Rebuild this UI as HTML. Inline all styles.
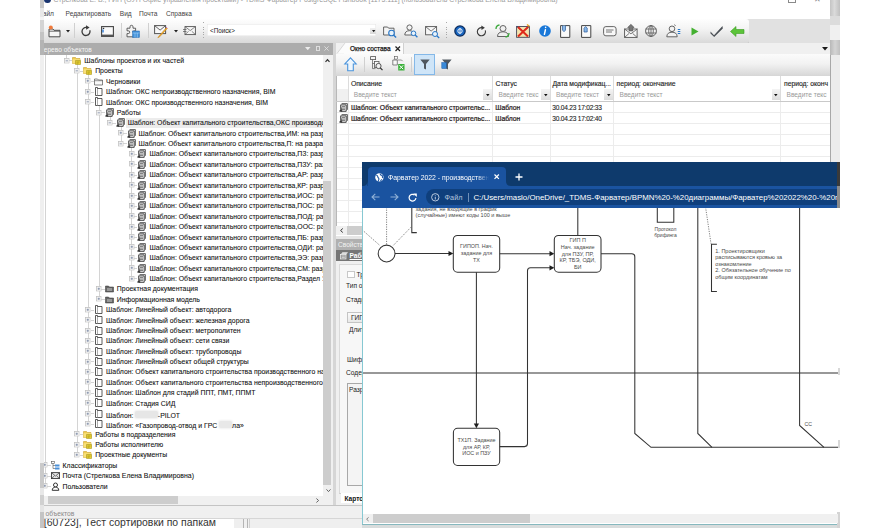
<!DOCTYPE html><html><head><meta charset="utf-8"><style>
html,body{margin:0;padding:0}
body{width:880px;height:528px;overflow:hidden;background:#fff;position:relative;font-family:"Liberation Sans",sans-serif}
.a{position:absolute}
.t{position:absolute;white-space:nowrap;line-height:1}
.clip{position:absolute;overflow:hidden}
svg.i{position:absolute;overflow:visible}
</style></head><body>

<svg width="0" height="0" style="position:absolute">
<defs>
<symbol id="xp" viewBox="0 0 6 6"><rect x="0.4" y="0.4" width="5.2" height="5.2" fill="#f0f0f0" stroke="#c0c0c0" stroke-width="0.8"/><path d="M1.8 3H4.2M3 1.8V4.2" stroke="#6a7a9a" stroke-width="0.7"/></symbol>
<symbol id="xm" viewBox="0 0 6 6"><rect x="0.4" y="0.4" width="5.2" height="5.2" fill="#f0f0f0" stroke="#c0c0c0" stroke-width="0.8"/><path d="M1.8 3H4.2" stroke="#6a7a9a" stroke-width="0.7"/></symbol>
<symbol id="yf" viewBox="0 0 9 9"><path d="M0.5 1.5h3l1 1h3.5v5h-7.5z" fill="#f0cc50" stroke="#c8a030" stroke-width="0.6"/><path d="M0.5 3.2h7.5v4.3h-7.5z" fill="#f8e07a"/><path d="M3.5 4.5h5v4h-5z" fill="#e8d030" stroke="#9a8a10" stroke-width="0.5"/><path d="M4.5 6h3M4.5 7.2h2" stroke="#8a7a10" stroke-width="0.5"/></symbol>
<symbol id="of" viewBox="0 0 9 8"><path d="M0.5 1.5h3l1 1h4v5h-8z" fill="#fafafa" stroke="#555" stroke-width="0.7"/><path d="M0.5 3.2h8" stroke="#555" stroke-width="0.6"/></symbol>
<symbol id="bk" viewBox="0 0 8 9"><path d="M1 0.5h2v8h-2z" fill="#fff" stroke="#333" stroke-width="0.8"/><path d="M3 1.5h4.5v7h-4.5" fill="#fff" stroke="#333" stroke-width="0.8"/></symbol>
<symbol id="dc" viewBox="0 0 9 9"><path d="M2.6 0.6h5.8v6.2" fill="none" stroke="#3a3a3a" stroke-width="0.8"/><path d="M1.6 1.9h5.6v6.4H1.4" fill="#fafafa" stroke="#2e2e2e" stroke-width="0.9"/><path d="M1.6 1.9V6.6L0.4 8.3h2.6z" fill="#333" stroke="#333" stroke-width="0.5"/><path d="M2.9 3.6h3.1M2.9 5.1h3.1M2.9 6.6h3.1" stroke="#4a4a4a" stroke-width="0.75"/></symbol>
<symbol id="df" viewBox="0 0 9 8"><path d="M0.5 1.5h3l1 1h4v5h-8z" fill="#666" stroke="#333" stroke-width="0.5"/><rect x="2" y="3.5" width="5" height="3" fill="#999"/></symbol>
<symbol id="cl" viewBox="0 0 9 9"><rect x="0.5" y="0.5" width="3" height="2" fill="#fff" stroke="#555" stroke-width="0.6"/><path d="M2 2.5v5h2M2 4.5h2" stroke="#555" stroke-width="0.6" fill="none"/><rect x="4" y="3.5" width="4.5" height="2" fill="#4a90d8"/><rect x="4" y="6.5" width="4.5" height="2" fill="#4a90d8"/></symbol>
<symbol id="ml" viewBox="0 0 10 8"><rect x="0.6" y="0.8" width="8.8" height="6.6" fill="#e8e8e8" stroke="#3a3a3a" stroke-width="1"/><path d="M0.6 0.8l4.4 3.8 4.4-3.8M0.6 7.4l3.2-3M9.4 7.4l-3.2-3" fill="none" stroke="#3a3a3a" stroke-width="0.8"/></symbol>
<symbol id="us" viewBox="0 0 9 9"><circle cx="4.5" cy="3" r="2" fill="#fff" stroke="#333" stroke-width="1"/><path d="M1.2 8.3c0-2.2 1.5-3.1 3.3-3.1s3.3 0.9 3.3 3.1z" fill="#fff" stroke="#333" stroke-width="1"/></symbol>
</defs></svg>

<div class="a" style="left:40px;top:0px;width:4px;height:8px;background:#c8c8c8;"></div>
<div class="a" style="left:40px;top:8px;width:4px;height:9px;background:#e8e8e8;"></div>
<div class="a" style="left:40px;top:17px;width:4px;height:3px;background:#f4f4f4;"></div>
<div class="a" style="left:40px;top:20px;width:4px;height:12px;background:#d4d4d4;"></div>
<div class="a" style="left:40px;top:32px;width:4px;height:8px;background:#c4c4c4;"></div>
<div class="a" style="left:40px;top:40px;width:4px;height:15px;background:#b4b4b4;"></div>
<div class="a" style="left:40px;top:55px;width:4px;height:408px;background:#efefef;"></div>
<div class="a" style="left:40px;top:463px;width:4px;height:25px;background:#cacaca;"></div>
<div class="a" style="left:40px;top:488px;width:4px;height:7px;background:#e8e8e8;"></div>
<div class="a" style="left:40px;top:495px;width:4px;height:10px;background:#d0d0d0;"></div>
<div class="a" style="left:40px;top:505px;width:4px;height:7px;background:#e4e4e4;"></div>
<div class="a" style="left:40px;top:512px;width:4px;height:16px;background:#c4c4c4;"></div>
<div class="a" style="left:830px;top:0px;width:10px;height:16px;background:linear-gradient(90deg,#c4c4c4,#dadada 45%,#c0c0c0);"></div>
<div class="a" style="left:830px;top:16px;width:10px;height:9px;background:#dcdcdc;"></div>
<div class="a" style="left:830px;top:25px;width:10px;height:15px;background:#f0f0f0;"></div>
<div class="a" style="left:830px;top:40px;width:10px;height:15px;background:linear-gradient(90deg,#b8b8b8,#d4d4d4 50%,#c0c0c0);"></div>
<div class="a" style="left:830px;top:55px;width:10px;height:107px;background:#ececec;"></div>
<div class="a" style="left:829.8px;top:55px;width:1px;height:107px;background:#a8a8a8;"></div>
<div class="clip" style="left:44px;top:0;width:786px;height:8px;background:#fff">
<div class="a" style="left:0px;top:-4px;width:6.5px;height:7px;border-radius:50%;background:#1a3570"></div>
<div class="t" style="left:9.60px;top:-2.62px;font-size:6.92px;color:#9a9a9a;font-weight:400;">Стрелкова Е. В., ГИП (ОУП Офис управления проектами) - TDMS Фарватер PostgreSQL Fishbook [1175.111] (пользователь Стрелкова Елена Владимировна)</div>
<div class="a" style="left:744px;top:-6px;width:6px;height:7px;border:1px solid #8a8a8a"></div>
<div class="t" style="left:769.50px;top:-4.40px;font-size:8px;color:#8a8a8a;font-weight:400;">✕</div>
</div>
<div class="clip" style="left:44px;top:8px;width:786px;height:11px;background:#fff">
<div class="t" style="left:-6.30px;top:2.99px;font-size:6.6px;color:#444;font-weight:400;">Файл</div>
<div class="t" style="left:21.60px;top:2.99px;font-size:6.6px;color:#444;font-weight:400;">Редактировать</div>
<div class="t" style="left:75.75px;top:2.99px;font-size:6.6px;color:#444;font-weight:400;">Вид</div>
<div class="t" style="left:95.00px;top:2.99px;font-size:6.6px;color:#444;font-weight:400;">Почта</div>
<div class="t" style="left:122.00px;top:2.99px;font-size:6.6px;color:#444;font-weight:400;">Справка</div>
</div>
<div class="a" style="left:44px;top:19px;width:786px;height:24px;background:#e1e1e1;"></div>
<div class="a" style="left:44px;top:19px;width:705px;height:23.5px;background:linear-gradient(#fefefe,#f4f4f4 40%,#d9d9d9);border-radius:0 3px 3px 0;box-shadow:0 1px 0 #bdbdbd"></div>
<div class="a" style="left:73.75px;top:23px;width:1px;height:15px;background:#d0d0d0;"></div>
<div class="a" style="left:121px;top:23px;width:1px;height:15px;background:#d0d0d0;"></div>
<div class="a" style="left:147.5px;top:23px;width:1px;height:15px;background:#d0d0d0;"></div>
<div class="a" style="left:203px;top:22px;width:1px;height:17px;background:repeating-linear-gradient(#a8a8a8 0 1px,transparent 1px 2.5px)"></div>
<div class="a" style="left:446px;top:22px;width:1px;height:17px;background:repeating-linear-gradient(#a8a8a8 0 1px,transparent 1px 2.5px)"></div>
<svg class="i" style="left:47.5px;top:24.5px" width="13" height="13" viewBox="0 0 13 13"><path d="M1 4h4l1 1.3h6v6.5H1z" fill="#f6f6f6" stroke="#4a4a4a" stroke-width="1"/><path d="M1 6.2h11" stroke="#4a4a4a" stroke-width="0.8"/><circle cx="2.8" cy="2.6" r="2" fill="#f07a3a"/></svg>
<svg class="i" style="left:66px;top:30px" width="4" height="3" viewBox="0 0 4 3"><path d="M0 0h4L2 2.5z" fill="#222"/></svg>
<svg class="i" style="left:81px;top:25px" width="11" height="12" viewBox="0 0 11 12"><path d="M8.8 5.2A4 4 0 1 1 6 2.6" fill="none" stroke="#3a3a3a" stroke-width="1.3"/><path d="M5 0.3l3.6 2.3-3.4 2.2z" fill="#3a3a3a"/></svg>
<svg class="i" style="left:101px;top:25.5px" width="13" height="11" viewBox="0 0 13 11"><rect x="0.6" y="0.6" width="11.8" height="9.8" fill="#fafafa" stroke="#444" stroke-width="1.1"/><rect x="0.6" y="8.6" width="11.8" height="1.8" fill="#555"/><path d="M2 3.5v3" stroke="#2a7ad8" stroke-width="1.4"/><rect x="1.8" y="1.8" width="1.4" height="1.2" fill="#333"/></svg>
<svg class="i" style="left:126px;top:24px" width="14" height="14" viewBox="0 0 14 14"><path d="M1 4.2h3v-1.4a1.5 1.5 0 0 1 3 0v1.4h2.6v2.6H8.2a1.4 1.4 0 0 0 0 2.8h1.4v3.2H1V9.6h1.3a1.4 1.4 0 0 0 0-2.8H1z" fill="#f3f3f3" stroke="#505050" stroke-width="0.9"/><rect x="6.5" y="7" width="7" height="6.5" fill="#3f8fd8" stroke="#2a6ab0" stroke-width="0.5"/><path d="M6.5 9h7M9 9v4.5M11.3 9v4.5" stroke="#bfe0ff" stroke-width="0.5"/></svg>
<svg class="i" style="left:154px;top:24px" width="14" height="14" viewBox="0 0 14 14"><rect x="0.6" y="1.6" width="11" height="8" fill="#f8f8f8" stroke="#555" stroke-width="1"/><path d="M0.6 1.6l5.5 4.5 5.5-4.5" fill="none" stroke="#555" stroke-width="0.9"/><path d="M12.5 3.5l-7.5 8.5-1.2 1.8 1.9-1 7.6-8.4z" fill="#f2b030" stroke="#c07a10" stroke-width="0.5"/><path d="M12 3l1.3 1.2" stroke="#c46ab8" stroke-width="1"/></svg>
<svg class="i" style="left:173.5px;top:30px" width="4" height="3" viewBox="0 0 4 3"><path d="M0 0h4L2 2.5z" fill="#222"/></svg>
<svg class="i" style="left:182.5px;top:26px" width="13" height="10" viewBox="0 0 13 10"><rect x="2" y="0.6" width="10.4" height="8" fill="#f6f6f6" stroke="#555" stroke-width="0.9"/><path d="M2 0.6l5.2 4 5.2-4M2 8.6l3.6-3.3M12.4 8.6l-3.6-3.3" fill="none" stroke="#555" stroke-width="0.7"/><path d="M0 3.5h3.5M0 5.5h3.5" stroke="#555" stroke-width="0.7"/></svg>
<div class="a" style="left:207px;top:23.7px;width:169px;height:12.8px;background:#fff;box-shadow:inset 0 0 0 0.5px #e4e4e4"></div>
<div class="t" style="left:210.00px;top:28.40px;font-size:6.3px;color:#222;font-weight:400;">&lt;Поиск&gt;</div>
<div class="a" style="left:370px;top:27.5px;width:6px;height:6px;background:linear-gradient(#f0f0f0,#d8d8d8);"></div>
<svg class="i" style="left:371.5px;top:29.8px" width="3.4" height="2.4" viewBox="0 0 3.4 2.4"><path d="M0 0h3.4L1.7 2.2z" fill="#222"/></svg>
<svg class="i" style="left:382.5px;top:24.5px" width="14" height="13" viewBox="0 0 14 13"><path d="M0.6 2h4l1 1.2h5.4v6.8H0.6z" fill="#f4f4f4" stroke="#555" stroke-width="0.9"/><circle cx="8.5" cy="8" r="2.8" fill="#e8f3fb" stroke="#2a78c8" stroke-width="1.1"/><path d="M10.5 10l2.6 2.6" stroke="#2a78c8" stroke-width="1.4"/></svg>
<svg class="i" style="left:404px;top:24px" width="14" height="14" viewBox="0 0 14 14"><circle cx="5.5" cy="3.5" r="2.6" fill="#f6f6f6" stroke="#555" stroke-width="0.9"/><path d="M0.8 11c0-3 2-4.3 4.7-4.3s4.7 1.3 4.7 4.3z" fill="#f6f6f6" stroke="#555" stroke-width="0.9"/><circle cx="9.5" cy="9.3" r="2.3" fill="#e8f3fb" stroke="#2a78c8" stroke-width="1"/><path d="M11.2 11l2.2 2.2" stroke="#2a78c8" stroke-width="1.3"/></svg>
<svg class="i" style="left:425px;top:24.5px" width="15" height="13" viewBox="0 0 15 13"><rect x="0.6" y="1.6" width="11" height="8.2" fill="#f6f6f6" stroke="#555" stroke-width="0.9"/><path d="M0.6 1.6l5.5 4.5 5.5-4.5" fill="none" stroke="#555" stroke-width="0.8"/><circle cx="10" cy="9" r="2.5" fill="#e8f3fb" stroke="#2a78c8" stroke-width="1"/><path d="M11.8 10.8l2.4 2.2" stroke="#2a78c8" stroke-width="1.3"/></svg>
<svg class="i" style="left:454px;top:25px" width="12" height="12" viewBox="0 0 12 12"><circle cx="6" cy="6" r="5.8" fill="#0b2a5a"/><circle cx="6" cy="6" r="4.6" fill="#1a66c0"/><circle cx="6" cy="6" r="2.2" fill="none" stroke="#fff" stroke-width="0.9"/><path d="M6 3v6" stroke="#fff" stroke-width="0.9"/></svg>
<svg class="i" style="left:476px;top:25px" width="11.5" height="12" viewBox="0 0 11.5 12"><path d="M9.3 5.4A4.1 4.1 0 1 1 6.3 2.7" fill="none" stroke="#3a3a3a" stroke-width="1.1"/><path d="M5.3 0.4l3.6 2.3-3.4 2.2z" fill="#3a3a3a"/></svg>
<svg class="i" style="left:495px;top:24px" width="15" height="14" viewBox="0 0 15 14"><circle cx="8" cy="4.5" r="3" fill="#f0f0f0" stroke="#555" stroke-width="0.9"/><path d="M2.5 12.5c0-3.3 2.4-4.7 5.5-4.7s5.5 1.4 5.5 4.7z" fill="#f0f0f0" stroke="#555" stroke-width="0.9"/><path d="M1 5a4 4 0 0 1 3.5-4" fill="none" stroke="#3aa83a" stroke-width="1.3"/><path d="M14 9a4 4 0 0 1-3.5 4" fill="none" stroke="#3aa83a" stroke-width="1.3"/></svg>
<svg class="i" style="left:516px;top:24px" width="14" height="14" viewBox="0 0 14 14"><rect x="0.6" y="2.5" width="12.8" height="10.8" fill="#f4e4b0" stroke="#445" stroke-width="0.9"/><path d="M0.6 2.5l6.4 5 6.4-5" fill="none" stroke="#2a4a8a" stroke-width="0.9"/><path d="M2 3l10 9.5M12 3L2 12.5" stroke="#e02a1a" stroke-width="2"/><path d="M11 0.5l2.5 2" stroke="#e8a020" stroke-width="1.4"/></svg>
<svg class="i" style="left:539px;top:25px" width="12" height="12" viewBox="0 0 12 12"><circle cx="6" cy="6" r="5.8" fill="#1a78d8"/><path d="M6.6 2.3v0.1M6.4 4.8l-1 4.5" stroke="#fff" stroke-width="1.5" stroke-linecap="round"/></svg>
<svg class="i" style="left:560px;top:24.5px" width="10.5" height="13" viewBox="0 0 10.5 13"><path d="M0.6 0.6h9.2v11.8H0.6z" fill="#fafafa" stroke="#444" stroke-width="1"/><path d="M2.5 0.6v4.5l1.5 1.6 1.5-1.6V0.6" fill="#8ab8e8" stroke="#2a5a9a" stroke-width="0.7"/></svg>
<svg class="i" style="left:581px;top:24.5px" width="10.5" height="13" viewBox="0 0 10.5 13"><path d="M0.6 0.6h9.2v11.8H0.6z" fill="#fafafa" stroke="#444" stroke-width="1"/><path d="M3 7V3.2L4.6 1.5 6.2 3.2V7z" fill="#8ab8e8" stroke="#2a5a9a" stroke-width="0.7"/></svg>
<svg class="i" style="left:602.5px;top:25.5px" width="14" height="11" viewBox="0 0 14 11"><rect x="0.6" y="0.6" width="12.5" height="9.2" rx="2.3" fill="#f8f8f8" stroke="#555" stroke-width="0.9"/><path d="M3 4h7.5M3 6h6" stroke="#666" stroke-width="0.9"/></svg>
<svg class="i" style="left:624px;top:24px" width="14" height="14" viewBox="0 0 14 14"><rect x="0.6" y="5" width="12.5" height="8.4" fill="#f6f6f6" stroke="#555" stroke-width="0.9"/><path d="M0.6 5l6.3 4.8 6.3-4.8M0.6 13.4l4.5-4M13.1 13.4l-4.5-4" fill="none" stroke="#555" stroke-width="0.8"/><path d="M5 7V3.5H3.6l3.3-3.2 3.3 3.2H8.8V7z" fill="#777" stroke="#444" stroke-width="0.5"/></svg>
<svg class="i" style="left:645px;top:25px" width="12" height="12" viewBox="0 0 12 12"><circle cx="6" cy="6" r="5.4" fill="#f4f4f4" stroke="#555" stroke-width="0.9"/><ellipse cx="6" cy="6" rx="2.3" ry="5.4" fill="none" stroke="#555" stroke-width="0.8"/><path d="M0.6 4h10.8M0.6 8h10.8M6 0.6v10.8" stroke="#555" stroke-width="0.8"/></svg>
<svg class="i" style="left:666px;top:24px" width="15" height="14" viewBox="0 0 15 14"><circle cx="6" cy="4.8" r="2.8" fill="#f2f2f2" stroke="#555" stroke-width="0.9"/><path d="M0.8 12.8c0-3.3 2.3-4.6 5.2-4.6s5.2 1.3 5.2 4.6z" fill="#f2f2f2" stroke="#555" stroke-width="0.9"/><path d="M11.8 5.5h2.5M11.8 7.5h2.5M11.8 9.5h2.5" stroke="#2a78c8" stroke-width="1.1"/><path d="M8.5 0.5l1 1.5" stroke="#555" stroke-width="0.8"/></svg>
<svg class="i" style="left:691px;top:26.5px" width="8" height="9" viewBox="0 0 8 9"><path d="M0.5 0.5l7 4-7 4z" fill="#44b030"/></svg>
<svg class="i" style="left:710px;top:25px" width="13" height="12" viewBox="0 0 13 12"><path d="M0.5 6.5l3.5 3.8L12.5 1l0.3 2.5L4.2 12 0.5 8.5z" fill="#4a4f55"/></svg>
<svg class="i" style="left:730px;top:25.5px" width="14.5" height="11" viewBox="0 0 14.5 11"><path d="M0.5 5.5L6 0.5v3h8v4H6v3z" fill="#5cc43a" stroke="#3a9a22" stroke-width="0.6"/></svg>
<div class="a" style="left:44px;top:42.5px;width:289px;height:12px;background:#acacac;"></div>
<div class="clip" style="left:44px;top:42.5px;width:200px;height:12px">
<div class="t" style="left:-4.70px;top:4.09px;font-size:6.6px;color:#f5f5f5;font-weight:400;">Дерево объектов</div>
</div>
<svg class="i" style="left:305px;top:47px" width="5.5" height="3.5" viewBox="0 0 5.5 3.5"><path d="M0 0h5.5L2.75 3.2z" fill="#ececec"/></svg>
<div class="a" style="left:316px;top:46px;width:3.5px;height:4.5px;border:0.8px solid #dedede;box-sizing:border-box"></div>
<svg class="i" style="left:324px;top:46px" width="5" height="5" viewBox="0 0 5 5"><path d="M0.4 0.4l4.2 4.2M4.6 0.4L0.4 4.6" stroke="#e4e4e4" stroke-width="0.8"/></svg>
<div class="a" style="left:44px;top:54.5px;width:279px;height:441px;background:#fff;"></div>
<div class="a" style="left:323px;top:54.5px;width:10px;height:441px;background:#f0f0f0;"></div>
<div class="a" style="left:323.3px;top:181px;width:7.6px;height:304.3px;background:#cdcdcd;"></div>
<svg class="i" style="left:325.2px;top:58.8px" width="5" height="3.2" viewBox="0 0 5 3.2"><path d="M0.5 2.8L2.5 0.6 4.5 2.8" fill="none" stroke="#333" stroke-width="1.2"/></svg>
<svg class="i" style="left:325.5px;top:488.5px" width="5" height="3.2" viewBox="0 0 5 3.2"><path d="M0.5 0.4L2.5 2.6 4.5 0.4" fill="none" stroke="#555" stroke-width="0.9"/></svg>
<div class="a" style="left:44px;top:495.5px;width:279px;height:9.5px;background:#f0f0f0;"></div>
<div class="a" style="left:47.5px;top:496px;width:130.5px;height:8.3px;background:#cdcdcd;"></div>
<svg class="i" style="left:315.5px;top:497.5px" width="3.2" height="5" viewBox="0 0 3.2 5"><path d="M0.4 0.5L2.6 2.5 0.4 4.5" fill="none" stroke="#555" stroke-width="0.9"/></svg>
<div class="a" style="left:323px;top:495.5px;width:10px;height:9.5px;background:#f0f0f0;"></div>
<div class="a" style="left:333px;top:42.5px;width:3px;height:463px;background:#d6d6d6;"></div>
<div class="a" style="left:44px;top:505px;width:289px;height:0.8px;background:#b8b8b8;"></div>
<div class="clip" style="left:44px;top:54.5px;width:279px;height:441px">
<div class="a" style="left:33.15px;top:9.45px;width:0;height:390.94px;border-left:0.8px solid #d4d4d4"></div>
<div class="a" style="left:44.00px;top:19.83px;width:0;height:349.42px;border-left:0.8px solid #d4d4d4"></div>
<div class="a" style="left:54.85px;top:50.97px;width:0;height:193.72px;border-left:0.8px solid #d4d4d4"></div>
<div class="a" style="left:65.70px;top:61.35px;width:0;height:6.88px;border-left:0.8px solid #d4d4d4"></div>
<div class="a" style="left:76.55px;top:71.73px;width:0;height:17.26px;border-left:0.8px solid #d4d4d4"></div>
<div class="a" style="left:87.40px;top:92.49px;width:0;height:131.44px;border-left:0.8px solid #d4d4d4"></div>
<div class="a" style="left:0.60px;top:0.00px;width:0;height:431.53px;border-left:0.8px solid #d4d4d4"></div>
<div class="a" style="left:22.30px;top:0.00px;width:0;height:5.95px;border-left:0.8px solid #d4d4d4"></div>
<div class="a" style="left:24.80px;top:5.95px;width:3.50px;height:0;border-top:0.8px solid #d4d4d4"></div>
<svg class="i" style="left:19.50px;top:3.15px" width="5.6" height="5.6"><use href="#xm"/></svg>
<svg class="i" style="left:28.30px;top:1.45px" width="9" height="9"><use href="#yf"/></svg>
<div class="t" style="left:40.30px;top:3.54px;font-size:6.9px;color:#101010;font-weight:400;-webkit-text-stroke:0.08px #101010">Шаблоны проектов и их частей</div>
<div class="a" style="left:35.65px;top:16.33px;width:3.50px;height:0;border-top:0.8px solid #d4d4d4"></div>
<svg class="i" style="left:30.35px;top:13.53px" width="5.6" height="5.6"><use href="#xm"/></svg>
<svg class="i" style="left:39.15px;top:11.83px" width="9" height="9"><use href="#yf"/></svg>
<div class="t" style="left:51.15px;top:13.91px;font-size:6.9px;color:#101010;font-weight:400;-webkit-text-stroke:0.08px #101010">Проекты</div>
<div class="a" style="left:46.50px;top:26.71px;width:3.50px;height:0;border-top:0.8px solid #d4d4d4"></div>
<svg class="i" style="left:41.20px;top:23.91px" width="5.6" height="5.6"><use href="#xp"/></svg>
<svg class="i" style="left:50.00px;top:22.21px" width="9" height="9"><use href="#of"/></svg>
<div class="t" style="left:62.00px;top:24.30px;font-size:6.9px;color:#101010;font-weight:400;-webkit-text-stroke:0.08px #101010">Черновики</div>
<div class="a" style="left:46.50px;top:37.09px;width:3.50px;height:0;border-top:0.8px solid #d4d4d4"></div>
<svg class="i" style="left:41.20px;top:34.29px" width="5.6" height="5.6"><use href="#xp"/></svg>
<svg class="i" style="left:50.00px;top:32.59px" width="9" height="9"><use href="#bk"/></svg>
<div class="t" style="left:62.00px;top:34.68px;font-size:6.9px;color:#101010;font-weight:400;-webkit-text-stroke:0.08px #101010">Шаблон: ОКС непроизводственного назначения, BIM</div>
<div class="a" style="left:46.50px;top:47.47px;width:3.50px;height:0;border-top:0.8px solid #d4d4d4"></div>
<svg class="i" style="left:41.20px;top:44.67px" width="5.6" height="5.6"><use href="#xm"/></svg>
<svg class="i" style="left:50.00px;top:42.97px" width="9" height="9"><use href="#bk"/></svg>
<div class="t" style="left:62.00px;top:45.05px;font-size:6.9px;color:#101010;font-weight:400;-webkit-text-stroke:0.08px #101010">Шаблон: ОКС производственного назначения, BIM</div>
<div class="a" style="left:57.35px;top:57.85px;width:3.50px;height:0;border-top:0.8px solid #d4d4d4"></div>
<svg class="i" style="left:52.05px;top:55.05px" width="5.6" height="5.6"><use href="#xm"/></svg>
<svg class="i" style="left:60.85px;top:53.35px" width="9" height="9"><use href="#dc"/></svg>
<div class="t" style="left:72.85px;top:55.44px;font-size:6.9px;color:#101010;font-weight:400;-webkit-text-stroke:0.08px #101010">Работы</div>
<div class="a" style="left:82.20px;top:63.03px;width:300px;height:10px;background:#ececec"></div>
<div class="a" style="left:68.20px;top:68.23px;width:3.50px;height:0;border-top:0.8px solid #d4d4d4"></div>
<svg class="i" style="left:62.90px;top:65.43px" width="5.6" height="5.6"><use href="#xm"/></svg>
<svg class="i" style="left:71.70px;top:63.73px" width="9" height="9"><use href="#dc"/></svg>
<div class="t" style="left:83.70px;top:65.81px;font-size:6.9px;color:#101010;font-weight:400;-webkit-text-stroke:0.08px #101010">Шаблон: Объект капитального строительства,ОКС производственного назначения</div>
<div class="a" style="left:79.05px;top:78.61px;width:3.50px;height:0;border-top:0.8px solid #d4d4d4"></div>
<svg class="i" style="left:73.75px;top:75.81px" width="5.6" height="5.6"><use href="#xp"/></svg>
<svg class="i" style="left:82.55px;top:74.11px" width="9" height="9"><use href="#dc"/></svg>
<div class="t" style="left:94.55px;top:76.20px;font-size:6.9px;color:#101010;font-weight:400;-webkit-text-stroke:0.08px #101010">Шаблон: Объект капитального строительства,ИМ: на разработку</div>
<div class="a" style="left:79.05px;top:88.99px;width:3.50px;height:0;border-top:0.8px solid #d4d4d4"></div>
<svg class="i" style="left:73.75px;top:86.19px" width="5.6" height="5.6"><use href="#xm"/></svg>
<svg class="i" style="left:82.55px;top:84.49px" width="9" height="9"><use href="#dc"/></svg>
<div class="t" style="left:94.55px;top:86.58px;font-size:6.9px;color:#101010;font-weight:400;-webkit-text-stroke:0.08px #101010">Шаблон: Объект капитального строительства,П: на разработку</div>
<div class="a" style="left:89.90px;top:99.37px;width:3.50px;height:0;border-top:0.8px solid #d4d4d4"></div>
<svg class="i" style="left:84.60px;top:96.57px" width="5.6" height="5.6"><use href="#xp"/></svg>
<svg class="i" style="left:93.40px;top:94.87px" width="9" height="9"><use href="#dc"/></svg>
<div class="t" style="left:105.40px;top:96.95px;font-size:6.9px;color:#101010;font-weight:400;-webkit-text-stroke:0.08px #101010">Шаблон: Объект капитального строительства,ПЗ: разработка</div>
<div class="a" style="left:89.90px;top:109.75px;width:3.50px;height:0;border-top:0.8px solid #d4d4d4"></div>
<svg class="i" style="left:84.60px;top:106.95px" width="5.6" height="5.6"><use href="#xp"/></svg>
<svg class="i" style="left:93.40px;top:105.25px" width="9" height="9"><use href="#dc"/></svg>
<div class="t" style="left:105.40px;top:107.33px;font-size:6.9px;color:#101010;font-weight:400;-webkit-text-stroke:0.08px #101010">Шаблон: Объект капитального строительства,ПЗУ: разработка</div>
<div class="a" style="left:89.90px;top:120.13px;width:3.50px;height:0;border-top:0.8px solid #d4d4d4"></div>
<svg class="i" style="left:84.60px;top:117.33px" width="5.6" height="5.6"><use href="#xp"/></svg>
<svg class="i" style="left:93.40px;top:115.63px" width="9" height="9"><use href="#dc"/></svg>
<div class="t" style="left:105.40px;top:117.71px;font-size:6.9px;color:#101010;font-weight:400;-webkit-text-stroke:0.08px #101010">Шаблон: Объект капитального строительства,АР: разработка</div>
<div class="a" style="left:89.90px;top:130.51px;width:3.50px;height:0;border-top:0.8px solid #d4d4d4"></div>
<svg class="i" style="left:84.60px;top:127.71px" width="5.6" height="5.6"><use href="#xp"/></svg>
<svg class="i" style="left:93.40px;top:126.01px" width="9" height="9"><use href="#dc"/></svg>
<div class="t" style="left:105.40px;top:128.09px;font-size:6.9px;color:#101010;font-weight:400;-webkit-text-stroke:0.08px #101010">Шаблон: Объект капитального строительства,КР: разработка</div>
<div class="a" style="left:89.90px;top:140.89px;width:3.50px;height:0;border-top:0.8px solid #d4d4d4"></div>
<svg class="i" style="left:84.60px;top:138.09px" width="5.6" height="5.6"><use href="#xp"/></svg>
<svg class="i" style="left:93.40px;top:136.39px" width="9" height="9"><use href="#dc"/></svg>
<div class="t" style="left:105.40px;top:138.47px;font-size:6.9px;color:#101010;font-weight:400;-webkit-text-stroke:0.08px #101010">Шаблон: Объект капитального строительства,ИОС: разработка</div>
<div class="a" style="left:89.90px;top:151.27px;width:3.50px;height:0;border-top:0.8px solid #d4d4d4"></div>
<svg class="i" style="left:84.60px;top:148.47px" width="5.6" height="5.6"><use href="#xp"/></svg>
<svg class="i" style="left:93.40px;top:146.77px" width="9" height="9"><use href="#dc"/></svg>
<div class="t" style="left:105.40px;top:148.86px;font-size:6.9px;color:#101010;font-weight:400;-webkit-text-stroke:0.08px #101010">Шаблон: Объект капитального строительства,ПОС: разработка</div>
<div class="a" style="left:89.90px;top:161.65px;width:3.50px;height:0;border-top:0.8px solid #d4d4d4"></div>
<svg class="i" style="left:84.60px;top:158.85px" width="5.6" height="5.6"><use href="#xp"/></svg>
<svg class="i" style="left:93.40px;top:157.15px" width="9" height="9"><use href="#dc"/></svg>
<div class="t" style="left:105.40px;top:159.24px;font-size:6.9px;color:#101010;font-weight:400;-webkit-text-stroke:0.08px #101010">Шаблон: Объект капитального строительства,ПОД: разработка</div>
<div class="a" style="left:89.90px;top:172.03px;width:3.50px;height:0;border-top:0.8px solid #d4d4d4"></div>
<svg class="i" style="left:84.60px;top:169.23px" width="5.6" height="5.6"><use href="#xp"/></svg>
<svg class="i" style="left:93.40px;top:167.53px" width="9" height="9"><use href="#dc"/></svg>
<div class="t" style="left:105.40px;top:169.62px;font-size:6.9px;color:#101010;font-weight:400;-webkit-text-stroke:0.08px #101010">Шаблон: Объект капитального строительства,ООС: разработка</div>
<div class="a" style="left:89.90px;top:182.41px;width:3.50px;height:0;border-top:0.8px solid #d4d4d4"></div>
<svg class="i" style="left:84.60px;top:179.61px" width="5.6" height="5.6"><use href="#xp"/></svg>
<svg class="i" style="left:93.40px;top:177.91px" width="9" height="9"><use href="#dc"/></svg>
<div class="t" style="left:105.40px;top:180.00px;font-size:6.9px;color:#101010;font-weight:400;-webkit-text-stroke:0.08px #101010">Шаблон: Объект капитального строительства,ПБ: разработка</div>
<div class="a" style="left:89.90px;top:192.79px;width:3.50px;height:0;border-top:0.8px solid #d4d4d4"></div>
<svg class="i" style="left:84.60px;top:189.99px" width="5.6" height="5.6"><use href="#xp"/></svg>
<svg class="i" style="left:93.40px;top:188.29px" width="9" height="9"><use href="#dc"/></svg>
<div class="t" style="left:105.40px;top:190.38px;font-size:6.9px;color:#101010;font-weight:400;-webkit-text-stroke:0.08px #101010">Шаблон: Объект капитального строительства,ОДИ: разработка</div>
<div class="a" style="left:89.90px;top:203.17px;width:3.50px;height:0;border-top:0.8px solid #d4d4d4"></div>
<svg class="i" style="left:84.60px;top:200.37px" width="5.6" height="5.6"><use href="#xp"/></svg>
<svg class="i" style="left:93.40px;top:198.67px" width="9" height="9"><use href="#dc"/></svg>
<div class="t" style="left:105.40px;top:200.76px;font-size:6.9px;color:#101010;font-weight:400;-webkit-text-stroke:0.08px #101010">Шаблон: Объект капитального строительства,ЭЭ: разработка</div>
<div class="a" style="left:89.90px;top:213.55px;width:3.50px;height:0;border-top:0.8px solid #d4d4d4"></div>
<svg class="i" style="left:84.60px;top:210.75px" width="5.6" height="5.6"><use href="#xp"/></svg>
<svg class="i" style="left:93.40px;top:209.05px" width="9" height="9"><use href="#dc"/></svg>
<div class="t" style="left:105.40px;top:211.14px;font-size:6.9px;color:#101010;font-weight:400;-webkit-text-stroke:0.08px #101010">Шаблон: Объект капитального строительства,СМ: разработка</div>
<div class="a" style="left:89.90px;top:223.93px;width:3.50px;height:0;border-top:0.8px solid #d4d4d4"></div>
<svg class="i" style="left:84.60px;top:221.13px" width="5.6" height="5.6"><use href="#xp"/></svg>
<svg class="i" style="left:93.40px;top:219.43px" width="9" height="9"><use href="#dc"/></svg>
<div class="t" style="left:105.40px;top:221.52px;font-size:6.9px;color:#101010;font-weight:400;-webkit-text-stroke:0.08px #101010">Шаблон: Объект капитального строительства,Раздел 1</div>
<div class="a" style="left:57.35px;top:234.31px;width:3.50px;height:0;border-top:0.8px solid #d4d4d4"></div>
<svg class="i" style="left:52.05px;top:231.51px" width="5.6" height="5.6"><use href="#xp"/></svg>
<svg class="i" style="left:60.85px;top:229.81px" width="9" height="9"><use href="#df"/></svg>
<div class="t" style="left:72.85px;top:231.90px;font-size:6.9px;color:#101010;font-weight:400;-webkit-text-stroke:0.08px #101010">Проектная документация</div>
<div class="a" style="left:57.35px;top:244.69px;width:3.50px;height:0;border-top:0.8px solid #d4d4d4"></div>
<svg class="i" style="left:52.05px;top:241.89px" width="5.6" height="5.6"><use href="#xp"/></svg>
<svg class="i" style="left:60.85px;top:240.19px" width="9" height="9"><use href="#df"/></svg>
<div class="t" style="left:72.85px;top:242.28px;font-size:6.9px;color:#101010;font-weight:400;-webkit-text-stroke:0.08px #101010">Информационная модель</div>
<div class="a" style="left:46.50px;top:255.07px;width:3.50px;height:0;border-top:0.8px solid #d4d4d4"></div>
<svg class="i" style="left:41.20px;top:252.27px" width="5.6" height="5.6"><use href="#xp"/></svg>
<svg class="i" style="left:50.00px;top:250.57px" width="9" height="9"><use href="#bk"/></svg>
<div class="t" style="left:62.00px;top:252.66px;font-size:6.9px;color:#101010;font-weight:400;-webkit-text-stroke:0.08px #101010">Шаблон: Линейный объект: автодорога</div>
<div class="a" style="left:46.50px;top:265.45px;width:3.50px;height:0;border-top:0.8px solid #d4d4d4"></div>
<svg class="i" style="left:41.20px;top:262.65px" width="5.6" height="5.6"><use href="#xp"/></svg>
<svg class="i" style="left:50.00px;top:260.95px" width="9" height="9"><use href="#bk"/></svg>
<div class="t" style="left:62.00px;top:263.03px;font-size:6.9px;color:#101010;font-weight:400;-webkit-text-stroke:0.08px #101010">Шаблон: Линейный объект: железная дорога</div>
<div class="a" style="left:46.50px;top:275.83px;width:3.50px;height:0;border-top:0.8px solid #d4d4d4"></div>
<svg class="i" style="left:41.20px;top:273.03px" width="5.6" height="5.6"><use href="#xp"/></svg>
<svg class="i" style="left:50.00px;top:271.33px" width="9" height="9"><use href="#bk"/></svg>
<div class="t" style="left:62.00px;top:273.41px;font-size:6.9px;color:#101010;font-weight:400;-webkit-text-stroke:0.08px #101010">Шаблон: Линейный объект: метрополитен</div>
<div class="a" style="left:46.50px;top:286.21px;width:3.50px;height:0;border-top:0.8px solid #d4d4d4"></div>
<svg class="i" style="left:41.20px;top:283.41px" width="5.6" height="5.6"><use href="#xp"/></svg>
<svg class="i" style="left:50.00px;top:281.71px" width="9" height="9"><use href="#bk"/></svg>
<div class="t" style="left:62.00px;top:283.80px;font-size:6.9px;color:#101010;font-weight:400;-webkit-text-stroke:0.08px #101010">Шаблон: Линейный объект: сети связи</div>
<div class="a" style="left:46.50px;top:296.59px;width:3.50px;height:0;border-top:0.8px solid #d4d4d4"></div>
<svg class="i" style="left:41.20px;top:293.79px" width="5.6" height="5.6"><use href="#xp"/></svg>
<svg class="i" style="left:50.00px;top:292.09px" width="9" height="9"><use href="#bk"/></svg>
<div class="t" style="left:62.00px;top:294.18px;font-size:6.9px;color:#101010;font-weight:400;-webkit-text-stroke:0.08px #101010">Шаблон: Линейный объект: трубопроводы</div>
<div class="a" style="left:46.50px;top:306.97px;width:3.50px;height:0;border-top:0.8px solid #d4d4d4"></div>
<svg class="i" style="left:41.20px;top:304.17px" width="5.6" height="5.6"><use href="#xp"/></svg>
<svg class="i" style="left:50.00px;top:302.47px" width="9" height="9"><use href="#bk"/></svg>
<div class="t" style="left:62.00px;top:304.56px;font-size:6.9px;color:#101010;font-weight:400;-webkit-text-stroke:0.08px #101010">Шаблон: Линейный объект общей структуры</div>
<div class="a" style="left:46.50px;top:317.35px;width:3.50px;height:0;border-top:0.8px solid #d4d4d4"></div>
<svg class="i" style="left:41.20px;top:314.55px" width="5.6" height="5.6"><use href="#xp"/></svg>
<svg class="i" style="left:50.00px;top:312.85px" width="9" height="9"><use href="#bk"/></svg>
<div class="t" style="left:62.00px;top:314.94px;font-size:6.9px;color:#101010;font-weight:400;-webkit-text-stroke:0.08px #101010">Шаблон: Объект капитального строительства производственного назначения</div>
<div class="a" style="left:46.50px;top:327.73px;width:3.50px;height:0;border-top:0.8px solid #d4d4d4"></div>
<svg class="i" style="left:41.20px;top:324.93px" width="5.6" height="5.6"><use href="#xp"/></svg>
<svg class="i" style="left:50.00px;top:323.23px" width="9" height="9"><use href="#bk"/></svg>
<div class="t" style="left:62.00px;top:325.31px;font-size:6.9px;color:#101010;font-weight:400;-webkit-text-stroke:0.08px #101010">Шаблон: Объект капитального строительства непроизводственного назначения</div>
<div class="a" style="left:46.50px;top:338.11px;width:3.50px;height:0;border-top:0.8px solid #d4d4d4"></div>
<svg class="i" style="left:41.20px;top:335.31px" width="5.6" height="5.6"><use href="#xp"/></svg>
<svg class="i" style="left:50.00px;top:333.61px" width="9" height="9"><use href="#bk"/></svg>
<div class="t" style="left:62.00px;top:335.69px;font-size:6.9px;color:#101010;font-weight:400;-webkit-text-stroke:0.08px #101010">Шаблон: Шаблон для стадий ППТ, ПМТ, ППМТ</div>
<div class="a" style="left:46.50px;top:348.49px;width:3.50px;height:0;border-top:0.8px solid #d4d4d4"></div>
<svg class="i" style="left:41.20px;top:345.69px" width="5.6" height="5.6"><use href="#xp"/></svg>
<svg class="i" style="left:50.00px;top:343.99px" width="9" height="9"><use href="#bk"/></svg>
<div class="t" style="left:62.00px;top:346.07px;font-size:6.9px;color:#101010;font-weight:400;-webkit-text-stroke:0.08px #101010">Шаблон: Стадия СИД</div>
<div class="a" style="left:46.50px;top:358.87px;width:3.50px;height:0;border-top:0.8px solid #d4d4d4"></div>
<svg class="i" style="left:41.20px;top:356.07px" width="5.6" height="5.6"><use href="#xp"/></svg>
<svg class="i" style="left:50.00px;top:354.37px" width="9" height="9"><use href="#bk"/></svg>
<div class="t" style="left:62.00px;top:356.45px;font-size:6.9px;color:#101010;font-weight:400;-webkit-text-stroke:0.08px #101010">Шаблон: <span style="display:inline-block;width:22.5px;height:7px;vertical-align:-0.5px;background:#e6e6e6;border-radius:2px;box-shadow:0 0 2px 1px #eeeeee"></span>-PILOT</div>
<div class="a" style="left:46.50px;top:369.25px;width:3.50px;height:0;border-top:0.8px solid #d4d4d4"></div>
<svg class="i" style="left:41.20px;top:366.45px" width="5.6" height="5.6"><use href="#xp"/></svg>
<svg class="i" style="left:50.00px;top:364.75px" width="9" height="9"><use href="#bk"/></svg>
<div class="t" style="left:62.00px;top:366.83px;font-size:6.9px;color:#101010;font-weight:400;-webkit-text-stroke:0.08px #101010">Шаблон: «Газопровод-отвод и ГРС <span style="display:inline-block;width:13px;height:7px;vertical-align:-0.5px;background:#e8e8e8;border-radius:2px;box-shadow:0 0 2px 1px #f0f0f0"></span>ла»</div>
<div class="a" style="left:35.65px;top:379.63px;width:3.50px;height:0;border-top:0.8px solid #d4d4d4"></div>
<svg class="i" style="left:30.35px;top:376.83px" width="5.6" height="5.6"><use href="#xp"/></svg>
<svg class="i" style="left:39.15px;top:375.13px" width="9" height="9"><use href="#yf"/></svg>
<div class="t" style="left:51.15px;top:377.21px;font-size:6.9px;color:#101010;font-weight:400;-webkit-text-stroke:0.08px #101010">Работы в подразделения</div>
<div class="a" style="left:35.65px;top:390.01px;width:3.50px;height:0;border-top:0.8px solid #d4d4d4"></div>
<svg class="i" style="left:30.35px;top:387.21px" width="5.6" height="5.6"><use href="#xp"/></svg>
<svg class="i" style="left:39.15px;top:385.51px" width="9" height="9"><use href="#yf"/></svg>
<div class="t" style="left:51.15px;top:387.59px;font-size:6.9px;color:#101010;font-weight:400;-webkit-text-stroke:0.08px #101010">Работы исполнителю</div>
<div class="a" style="left:35.65px;top:400.39px;width:3.50px;height:0;border-top:0.8px solid #d4d4d4"></div>
<svg class="i" style="left:30.35px;top:397.59px" width="5.6" height="5.6"><use href="#xp"/></svg>
<svg class="i" style="left:39.15px;top:395.89px" width="9" height="9"><use href="#yf"/></svg>
<div class="t" style="left:51.15px;top:397.98px;font-size:6.9px;color:#101010;font-weight:400;-webkit-text-stroke:0.08px #101010">Проектные документы</div>
<div class="a" style="left:3.10px;top:410.77px;width:3.50px;height:0;border-top:0.8px solid #d4d4d4"></div>
<svg class="i" style="left:-2.20px;top:407.97px" width="5.6" height="5.6"><use href="#xp"/></svg>
<svg class="i" style="left:6.60px;top:406.27px" width="9" height="9"><use href="#cl"/></svg>
<div class="t" style="left:18.60px;top:408.36px;font-size:6.9px;color:#101010;font-weight:400;-webkit-text-stroke:0.08px #101010">Классификаторы</div>
<div class="a" style="left:3.10px;top:421.15px;width:3.50px;height:0;border-top:0.8px solid #d4d4d4"></div>
<svg class="i" style="left:-2.20px;top:418.35px" width="5.6" height="5.6"><use href="#xp"/></svg>
<svg class="i" style="left:6.60px;top:416.65px" width="9" height="9"><use href="#ml"/></svg>
<div class="t" style="left:18.60px;top:418.74px;font-size:6.9px;color:#101010;font-weight:400;-webkit-text-stroke:0.08px #101010">Почта (Стрелкова Елена Владимировна)</div>
<div class="a" style="left:3.10px;top:431.53px;width:3.50px;height:0;border-top:0.8px solid #d4d4d4"></div>
<svg class="i" style="left:-2.20px;top:428.73px" width="5.6" height="5.6"><use href="#xp"/></svg>
<svg class="i" style="left:6.60px;top:427.03px" width="9" height="9"><use href="#us"/></svg>
<div class="t" style="left:18.60px;top:429.12px;font-size:6.9px;color:#101010;font-weight:400;-webkit-text-stroke:0.08px #101010">Пользователи</div>
</div>
<div class="a" style="left:44px;top:505.8px;width:786px;height:13px;background:#f0f0f0;"></div>
<div class="a" style="left:44px;top:505.2px;width:318px;height:0.8px;background:#c4c4c4;"></div>
<div class="a" style="left:44px;top:518.2px;width:318px;height:0.8px;background:#d6d6d6;"></div>
<div class="t" style="left:45.60px;top:510.94px;font-size:6.75px;color:#8a8a8a;font-weight:400;">объектов</div>
<div class="a" style="left:44px;top:518.8px;width:786px;height:10px;background:#fff;"></div>
<div class="clip" style="left:44px;top:518.8px;width:189.7px;height:10px">
<div class="t" style="left:-0.20px;top:-0.36px;font-size:10.45px;color:#333;font-weight:400;">[60723], Тест сортировки по папкам</div>
</div>
<div class="a" style="left:233.7px;top:518.8px;width:128.3px;height:9.2px;background:#efefef;"></div>
<div class="a" style="left:243.2px;top:519px;width:0.9px;height:9px;background:#b4b4b4;"></div>
<div class="a" style="left:247.2px;top:519px;width:0.9px;height:9px;background:#b4b4b4;"></div>
<div class="a" style="left:249.3px;top:519px;width:0.7px;height:9px;background:#d0d0d0;"></div>
<div class="a" style="left:336px;top:42.5px;width:494px;height:11px;background:#f0f0f0;"></div>
<div class="a" style="left:344px;top:43px;width:59px;height:10.5px;background:#fcfcfc;border-right:1px solid #d0d0d0"></div>
<svg class="i" style="left:336.5px;top:43px" width="8" height="10.5" viewBox="0 0 8 10.5"><path d="M0 10.5L8 0V10.5z" fill="#fcfcfc"/><path d="M0 10.5L8 0" stroke="#c8c8c8" stroke-width="0.7"/></svg>
<div class="t" style="left:350.00px;top:46.33px;font-size:6.5px;color:#1a1a1a;font-weight:400;-webkit-text-stroke:0.25px #1a1a1a">Окно состава</div>
<svg class="i" style="left:394.5px;top:45.8px" width="5.5" height="5.5" viewBox="0 0 5.5 5.5"><path d="M0.5 0.5l4.5 4.5M5 0.5L0.5 5" stroke="#222" stroke-width="1.2"/></svg>
<svg class="i" style="left:821.5px;top:47px" width="6" height="4" viewBox="0 0 6 4"><path d="M0 0h6L3 3.5z" fill="#1a1a1a"/></svg>
<div class="a" style="left:336px;top:53.5px;width:494px;height:22px;background:linear-gradient(#fbfbfb,#f2f2f2 45%,#d6d6d6);box-shadow:0 0.8px 0 #b8b8b8"></div>
<svg class="i" style="left:344.2px;top:56.5px" width="13" height="15" viewBox="0 0 13 15"><path d="M6.5 0.8L12.2 7H9.3v6.8H3.7V7H0.8z" fill="#eef6fd" stroke="#4a94dc" stroke-width="1.1"/></svg>
<div class="a" style="left:364.4px;top:57px;width:1px;height:15px;background:#d0d0d0;"></div>
<svg class="i" style="left:370.4px;top:56px" width="13" height="16" viewBox="0 0 13 16"><rect x="0.6" y="0.6" width="5" height="3" fill="#f6f6f6" stroke="#555" stroke-width="0.8"/><path d="M2.5 3.6v9h3M2.5 7.5h3" stroke="#555" stroke-width="0.7" fill="none"/><rect x="4.5" y="5.5" width="4.5" height="6" fill="#f8f8f8" stroke="#555" stroke-width="0.8"/><circle cx="8.5" cy="10" r="2.6" fill="#f0f0f0" stroke="#444" stroke-width="0.9"/><path d="M10.3 11.8l2.2 2.4" stroke="#333" stroke-width="1.2"/></svg>
<svg class="i" style="left:392px;top:56px" width="13" height="16" viewBox="0 0 13 16"><rect x="2.5" y="0.6" width="3" height="2.5" fill="#fafafa" stroke="#555" stroke-width="0.6"/><path d="M0.8 4h4.5v5H0.8z" fill="#f8f8f8" stroke="#555" stroke-width="0.7"/><path d="M6 4h3.5l1.2 1.2" stroke="#555" stroke-width="0.6" fill="none"/><rect x="6.2" y="8" width="6.3" height="6.5" fill="#3ab03a"/><path d="M7.5 9.3l3.7 3.9M11.2 9.3l-3.7 3.9" stroke="#fff" stroke-width="1"/></svg>
<div class="a" style="left:411.4px;top:57px;width:1px;height:15px;background:#d0d0d0;"></div>
<div class="a" style="left:414px;top:54.2px;width:21px;height:20.8px;background:#cfe5f8;border:1px solid #84b8e8;box-sizing:border-box"></div>
<svg class="i" style="left:419.5px;top:58.5px" width="10" height="11" viewBox="0 0 10 11"><path d="M0.3 0.5h9.4L6 5v5.5L4 9.5V5z" fill="#505860"/></svg>
<svg class="i" style="left:441px;top:58.5px" width="11" height="11" viewBox="0 0 11 11"><path d="M1 0.5h9.6L7 5v5.5L5 9.5V5z" fill="#505860"/><rect x="0.8" y="3.5" width="4.5" height="6" fill="#3a8ad8" stroke="#1a5aa8" stroke-width="0.5"/></svg>
<div class="a" style="left:335.7px;top:75.8px;width:494.3px;height:150px;background:#fff;"></div>
<div class="a" style="left:335.7px;top:75.8px;width:0.8px;height:150px;background:#b8b8b8;"></div>
<div class="a" style="left:336.5px;top:88.8px;width:12px;height:12px;background:#f0f0f0;"></div>
<div class="a" style="left:348.3px;top:76px;width:0.8px;height:25px;background:#dcdcdc;"></div>
<div class="a" style="left:492.2px;top:76px;width:0.8px;height:25px;background:#dcdcdc;"></div>
<div class="a" style="left:550.2px;top:76px;width:0.8px;height:25px;background:#dcdcdc;"></div>
<div class="a" style="left:613.4px;top:76px;width:0.8px;height:25px;background:#dcdcdc;"></div>
<div class="a" style="left:780.4px;top:76px;width:0.8px;height:25px;background:#dcdcdc;"></div>
<div class="a" style="left:336px;top:100.8px;width:494px;height:0.9px;background:#c9c9c9;"></div>
<div class="a" style="left:336.5px;top:112.4px;width:493.5px;height:0.7px;background:#ececec;"></div>
<div class="a" style="left:336.5px;top:123.34px;width:493.5px;height:0.7px;background:#ececec;"></div>
<div class="a" style="left:336.5px;top:134.28px;width:493.5px;height:0.7px;background:#ececec;"></div>
<div class="a" style="left:336.5px;top:145.22px;width:493.5px;height:0.7px;background:#ececec;"></div>
<div class="a" style="left:336.5px;top:156.16px;width:493.5px;height:0.7px;background:#ececec;"></div>
<div class="a" style="left:336.5px;top:167.1px;width:493.5px;height:0.7px;background:#ececec;"></div>
<div class="a" style="left:336.5px;top:178.04000000000002px;width:493.5px;height:0.7px;background:#ececec;"></div>
<div class="a" style="left:336.5px;top:188.98000000000002px;width:493.5px;height:0.7px;background:#ececec;"></div>
<div class="a" style="left:336.5px;top:199.92000000000002px;width:493.5px;height:0.7px;background:#ececec;"></div>
<div class="a" style="left:336.5px;top:210.86px;width:493.5px;height:0.7px;background:#ececec;"></div>
<div class="a" style="left:336.5px;top:221.8px;width:493.5px;height:0.7px;background:#ececec;"></div>
<div class="a" style="left:348.3px;top:101.5px;width:0.7px;height:124px;background:#ececec;"></div>
<div class="a" style="left:492.2px;top:101.5px;width:0.7px;height:124px;background:#ececec;"></div>
<div class="a" style="left:550.2px;top:101.5px;width:0.7px;height:124px;background:#ececec;"></div>
<div class="a" style="left:613.4px;top:101.5px;width:0.7px;height:124px;background:#ececec;"></div>
<div class="a" style="left:780.4px;top:101.5px;width:0.7px;height:124px;background:#ececec;"></div>
<div class="t" style="left:350.90px;top:81.40px;font-size:6.85px;color:#1e1e1e;font-weight:400;-webkit-text-stroke:0.12px #1e1e1e;letter-spacing:-0.05px">Описание</div>
<div class="t" style="left:495.50px;top:81.40px;font-size:6.85px;color:#1e1e1e;font-weight:400;-webkit-text-stroke:0.12px #1e1e1e;letter-spacing:-0.05px">Статус</div>
<div class="t" style="left:552.50px;top:81.40px;font-size:6.85px;color:#1e1e1e;font-weight:400;-webkit-text-stroke:0.12px #1e1e1e;letter-spacing:-0.05px">Дата модификац...</div>
<div class="t" style="left:616.60px;top:81.40px;font-size:6.85px;color:#1e1e1e;font-weight:400;-webkit-text-stroke:0.12px #1e1e1e;letter-spacing:-0.05px">период: окончание</div>
<div class="t" style="left:784.00px;top:81.40px;font-size:6.85px;color:#1e1e1e;font-weight:400;-webkit-text-stroke:0.12px #1e1e1e;letter-spacing:-0.05px">период: оконч</div>
<div class="t" style="left:353.75px;top:92.30px;font-size:6.58px;color:#9a9a9a;font-weight:400;">Введите текст</div>
<div class="t" style="left:498.50px;top:92.30px;font-size:6.58px;color:#9a9a9a;font-weight:400;">Введите текс</div>
<div class="t" style="left:556.00px;top:92.30px;font-size:6.58px;color:#9a9a9a;font-weight:400;">Введите текст</div>
<div class="t" style="left:619.50px;top:92.30px;font-size:6.58px;color:#9a9a9a;font-weight:400;">Введите текст</div>
<div class="t" style="left:786.50px;top:92.30px;font-size:6.58px;color:#9a9a9a;font-weight:400;">Введите текс</div>
<div class="a" style="left:483.2px;top:89px;width:8.5px;height:11.3px;background:linear-gradient(#f4f4f4,#dcdcdc);"></div>
<svg class="i" style="left:485.7px;top:93.6px" width="3.6" height="2.4" viewBox="0 0 3.6 2.4"><path d="M0 0h3.6L1.8 2.3z" fill="#111"/></svg>
<div class="a" style="left:541.2px;top:89px;width:8.5px;height:11.3px;background:linear-gradient(#f4f4f4,#dcdcdc);"></div>
<svg class="i" style="left:543.7px;top:93.6px" width="3.6" height="2.4" viewBox="0 0 3.6 2.4"><path d="M0 0h3.6L1.8 2.3z" fill="#111"/></svg>
<div class="a" style="left:604.4px;top:89px;width:8.5px;height:11.3px;background:linear-gradient(#f4f4f4,#dcdcdc);"></div>
<svg class="i" style="left:606.9px;top:93.6px" width="3.6" height="2.4" viewBox="0 0 3.6 2.4"><path d="M0 0h3.6L1.8 2.3z" fill="#111"/></svg>
<div class="a" style="left:771.5px;top:89px;width:8.5px;height:11.3px;background:linear-gradient(#f4f4f4,#dcdcdc);"></div>
<svg class="i" style="left:774.0px;top:93.6px" width="3.6" height="2.4" viewBox="0 0 3.6 2.4"><path d="M0 0h3.6L1.8 2.3z" fill="#111"/></svg>
<div class="clip" style="left:336px;top:101px;width:494px;height:24px">
<svg class="i" style="left:2.5px;top:2.10px" width="9" height="9"><use href="#dc"/></svg>
<div class="t" style="left:14.90px;top:4.22px;font-size:6.8px;color:#2a1c1c;font-weight:400;-webkit-text-stroke:0.22px #2a1c1c">Шаблон: Объект капитального строительс...</div>
<div class="t" style="left:159.20px;top:4.22px;font-size:6.8px;color:#2a1c1c;font-weight:400;-webkit-text-stroke:0.22px #2a1c1c">Шаблон</div>
<div class="t" style="left:216.30px;top:4.29px;font-size:6.6px;color:#1a1a1a;font-weight:400;letter-spacing:-0.22px;-webkit-text-stroke:0.1px #1a1a1a">30.04.23 17:02:33</div>
<svg class="i" style="left:2.5px;top:12.70px" width="9" height="9"><use href="#dc"/></svg>
<div class="t" style="left:14.90px;top:14.82px;font-size:6.8px;color:#2a1c1c;font-weight:400;-webkit-text-stroke:0.22px #2a1c1c">Шаблон: Объект капитального строительс...</div>
<div class="t" style="left:159.20px;top:14.82px;font-size:6.8px;color:#2a1c1c;font-weight:400;-webkit-text-stroke:0.22px #2a1c1c">Шаблон</div>
<div class="t" style="left:216.30px;top:14.89px;font-size:6.6px;color:#1a1a1a;font-weight:400;letter-spacing:-0.22px;-webkit-text-stroke:0.1px #1a1a1a">30.04.23 17:02:40</div>
</div>
<div class="a" style="left:336px;top:225.8px;width:494px;height:9.7px;background:#f0f0f0;"></div>
<div class="a" style="left:347px;top:226.3px;width:150px;height:8.7px;background:#cdcdcd;"></div>
<svg class="i" style="left:340px;top:228.3px" width="3.2" height="5" viewBox="0 0 3.2 5"><path d="M2.8 0.5L0.6 2.5 2.8 4.5" fill="none" stroke="#333" stroke-width="1"/></svg>
<div class="a" style="left:336px;top:235.5px;width:494px;height:3.4px;background:#e6e6e6;"></div>
<div class="a" style="left:336px;top:238.9px;width:494px;height:10.8px;background:#b0b0b0;"></div>
<div class="t" style="left:338.00px;top:242.09px;font-size:6.6px;color:#f2f2f2;font-weight:400;">Свойства</div>
<div class="a" style="left:336px;top:249.7px;width:494px;height:11.3px;background:#767676;"></div>
<svg class="i" style="left:339.5px;top:251.8px" width="8" height="7.5" viewBox="0 0 8 7.5"><path d="M1 2.5l1.5-2h5l-1.5 2" fill="#ddd" stroke="#eee" stroke-width="0.5"/><rect x="0.5" y="2.5" width="5.5" height="4.5" fill="#999" stroke="#f4f4f4" stroke-width="0.7"/><path d="M1.8 4h3M1.8 5.5h3" stroke="#fff" stroke-width="0.5"/></svg>
<div class="t" style="left:349.50px;top:253.49px;font-size:6.6px;color:#ffffff;font-weight:700;"><u>Работы</u></div>
<div class="a" style="left:336px;top:261px;width:494px;height:244px;background:#f0f0f0;"></div>
<div class="a" style="left:338.6px;top:264px;width:491px;height:228.5px;background:#f7f7f7;border-left:1px solid #dadada;border-top:1px solid #dadada"></div>
<div class="a" style="left:347px;top:270.6px;width:7.8px;height:7px;background:#fff;border:1px solid #c8c8c8;box-sizing:border-box"></div>
<div class="t" style="left:356.50px;top:271.89px;font-size:6.6px;color:#222;font-weight:400;">Транзитная</div>
<div class="t" style="left:346.00px;top:283.49px;font-size:6.6px;color:#222;font-weight:400;">Тип объекта</div>
<div class="t" style="left:346.00px;top:296.99px;font-size:6.6px;color:#222;font-weight:400;">Стадия</div>
<div class="a" style="left:347px;top:312px;width:60px;height:11px;background:linear-gradient(#fafafa,#e8e8e8);border:1px solid #c4c4c4;box-sizing:border-box"></div>
<div class="t" style="left:351.00px;top:315.29px;font-size:6.6px;color:#222;font-weight:400;">ГИП</div>
<div class="t" style="left:349.00px;top:326.69px;font-size:6.6px;color:#222;font-weight:400;">Длительность</div>
<div class="t" style="left:347.00px;top:357.09px;font-size:6.6px;color:#222;font-weight:400;">Шифр</div>
<div class="t" style="left:346.00px;top:370.19px;font-size:6.6px;color:#222;font-weight:400;">Содержание</div>
<div class="a" style="left:346.6px;top:383.2px;width:100px;height:102.5px;background:#f4f4f4;border:1px solid #a8a8a8;box-sizing:border-box"></div>
<div class="t" style="left:349.00px;top:387.19px;font-size:6.6px;color:#222;font-weight:400;">Разработка</div>
<div class="a" style="left:338.6px;top:492.5px;width:30px;height:0.8px;background:#d0d0d0;"></div>
<div class="a" style="left:340.6px;top:493px;width:30px;height:10px;background:#fff;"></div>
<div class="t" style="left:344.50px;top:496.09px;font-size:6.6px;color:#111;font-weight:700;">Карточка</div>
<div class="a" style="left:837.3px;top:162px;width:2.7px;height:24px;background:#3a3a3a;"></div>
<div class="a" style="left:837.3px;top:186px;width:2.7px;height:22px;background:#8a8a8a;"></div>
<div class="a" style="left:362px;top:162px;width:475.3px;height:24px;background:#0e3a6c;"></div>
<div class="a" style="left:362px;top:186px;width:475.3px;height:22px;background:#1a53a0;"></div>
<div class="a" style="left:367.5px;top:167px;width:138px;height:19px;background:#1a53a0;border-radius:4px 4px 0 0"></div>
<svg class="i" style="left:363px;top:181px" width="5" height="5" viewBox="0 0 5 5"><path d="M0 5Q4.5 5 4.5 0V5z" fill="#1a53a0"/></svg>
<svg class="i" style="left:505.5px;top:181px" width="5" height="5" viewBox="0 0 5 5"><path d="M0 0Q0 5 5 5H0z" fill="#1a53a0"/></svg>
<svg class="i" style="left:374.6px;top:172.7px" width="8.8" height="8.8" viewBox="0 0 8.8 8.8"><circle cx="4.4" cy="4.4" r="4.2" fill="#fff"/><path d="M1.3 2.3c1 0.2 1.6 0.9 1.6 1.7s0.8 1 1 1.8c0.1 0.7-0.5 1.5-0.7 2.5M5.3 0.6c-0.2 0.8 0.3 1.4 1 1.5 0.9 0.1 1.2 0.8 1.1 1.6-0.1 0.7 0.5 1.2 1.1 1.1M5.6 8.3c0-0.9 0.6-1.5 1.4-1.8" fill="none" stroke="#1a53a0" stroke-width="1.1"/></svg>
<div class="clip" style="left:388px;top:170px;width:101px;height:14px;-webkit-mask-image:linear-gradient(90deg,#000 88%,transparent)">
<div class="t" style="left:0.00px;top:4.70px;font-size:6.87px;color:#ffffff;font-weight:400;">Фарватер 2022 - производственная система</div>
</div>
<svg class="i" style="left:493.8px;top:174.4px" width="5.4" height="5.4" viewBox="0 0 5.4 5.4"><path d="M0.5 0.5l4.4 4.4M4.9 0.5L0.5 4.9" stroke="#fff" stroke-width="1.2"/></svg>
<svg class="i" style="left:514.5px;top:173px" width="8" height="8" viewBox="0 0 8 8"><path d="M4 0.5v7M0.5 4h7" stroke="#fff" stroke-width="1.3"/></svg>
<svg class="i" style="left:370.5px;top:193.2px" width="9" height="8" viewBox="0 0 9 8"><path d="M8.5 4H1.2M4.3 0.8L1 4l3.3 3.2" fill="none" stroke="#8fb0d6" stroke-width="1.1"/></svg>
<svg class="i" style="left:389.5px;top:193.2px" width="9" height="8" viewBox="0 0 9 8"><path d="M0.5 4h7.3M4.7 0.8L8 4 4.7 7.2" fill="none" stroke="#8fb0d6" stroke-width="1.1"/></svg>
<svg class="i" style="left:408px;top:192.5px" width="9" height="9" viewBox="0 0 9 9"><path d="M7.9 5A3.4 3.4 0 1 1 6.6 2" fill="none" stroke="#fff" stroke-width="1.2"/><path d="M5.2 0.4h3.6v3.6z" fill="#fff"/></svg>
<div class="a" style="left:425.6px;top:189px;width:411.7px;height:16px;background:#0f3f7c;border-radius:8px 0 0 8px"></div>
<svg class="i" style="left:431.2px;top:192.7px" width="8.6" height="8.6" viewBox="0 0 8.6 8.6"><circle cx="4.3" cy="4.3" r="3.7" fill="none" stroke="#c9d6e6" stroke-width="0.9"/><path d="M4.3 3.7v2.8M4.3 2.2v0.6" stroke="#c9d6e6" stroke-width="0.9"/></svg>
<div class="t" style="left:444.60px;top:194.46px;font-size:7.25px;color:#b4c6dc;font-weight:400;">Файл</div>
<div class="a" style="left:468px;top:192.5px;width:0.8px;height:9px;background:#6f8fb8;"></div>
<div class="clip" style="left:473px;top:190px;width:364.3px;height:14px">
<div class="t" style="left:0.40px;top:4.44px;font-size:7.88px;color:#ffffff;font-weight:400;">C:/Users/maslo/OneDrive/_TDMS-Фарватер/BPMN%20-%20диаграммы/Фарватер%202022%20-%20производственная</div>
</div>
<div class="a" style="left:362px;top:208px;width:475.5px;height:316px;background:#fff;"></div>
<div class="a" style="left:362px;top:208px;width:1px;height:316px;background:#86c8d2;"></div>
<div class="a" style="left:362px;top:523.5px;width:476px;height:1.2px;background:#86b8be;"></div>
<div class="a" style="left:362px;top:524.7px;width:476px;height:3.3px;background:#d8dcdc;"></div>
<div class="a" style="left:837.3px;top:512px;width:2.7px;height:16px;background:#d4d4d4;"></div>
<div class="a" style="left:363px;top:513.8px;width:474.5px;height:9.7px;background:#f0f0f0;"></div>
<div class="a" style="left:373px;top:514.4px;width:156.5px;height:8.8px;background:#cdcdcd;"></div>
<svg class="i" style="left:365.8px;top:517px" width="3" height="4.4" viewBox="0 0 3 4.4"><path d="M2.6 0.4L0.6 2.2 2.6 4" fill="none" stroke="#777" stroke-width="0.9"/></svg>
<div class="a" style="left:837.5px;top:368.4px;width:2.5px;height:6.8px;background:#d8d8d8;"></div>
<div class="a" style="left:837.5px;top:440px;width:2.5px;height:7.5px;background:#d8d8d8;"></div>
<div class="clip" style="left:363px;top:208px;width:474.5px;height:306.5px">
<svg class="i" style="left:-363px;top:-208px" width="880" height="528" viewBox="0 0 880 528">
<g fill="none" stroke="#333" stroke-width="1.05">
<circle cx="386.6" cy="253.5" r="8.4" fill="#fff"/>
<rect x="453.3" y="235.4" width="46.4" height="36.8" rx="4.2" fill="#fff"/>
<rect x="554.3" y="235.4" width="46.7" height="36.8" rx="4.2" fill="#fff"/>
<rect x="453.4" y="428.3" width="46.3" height="37.1" rx="4.2" fill="#fff"/>
<path d="M395 253.5H450"/>
<path d="M499.7 253.7H551"/>
<path d="M577.8 200V235.4"/>
<path d="M499.7 446.6H524.5Q527.5 446.6 527.5 443.6V270.8Q527.5 267.8 530.5 267.8H551"/>
<path d="M601 253.7H631.8Q634.8 253.7 634.8 256.7V433.5L651 447.3H845"/>
<path d="M697.8 200V433.5L712 447.3"/>
<path d="M799.6 200V425.5L824 447.3"/>
<path d="M476.4 272.2V425"/>
<path d="M340 372.9H838.8"/>
<path d="M416.8 232.6H411.8V200"/>
<path d="M716.9 244.2H711.5V291.5H716.9"/>
<path d="M657.3 200V222.3H673.8V200" fill="#fff"/>
</g>
<g fill="#1e1e1e">
<path d="M453.3 253.5l-4.8-2.6v5.2z"/><path d="M554.3 253.7l-4.8-2.6v5.2z"/><path d="M554.3 267.8l-4.8-2.6v5.2z"/><path d="M476.4 428.3l-2.6-4.8h5.2z"/>
</g>
<g fill="none" stroke="#4a4a4a" stroke-width="0.7" stroke-dasharray="1.2 1.2">
<path d="M386.6 200V244.8"/><path d="M355 223.5L379.7 245.3"/><path d="M393.4 245.3L411.6 226.6"/><path d="M704.5 200L711 243.6"/>
</g>
</svg>
</div>
<div class="clip" style="left:363px;top:208px;width:474.5px;height:306.5px">
<div class="t" style="left:52.60px;top:-0.62px;font-size:5.5px;color:#4a4a4a">задания, не входящие в график</div>
<div class="t" style="left:52.60px;top:4.98px;font-size:5.5px;color:#4a4a4a">(случайные) имеют коды 100 и выше</div>
<div class="t" style="left:53.50px;width:120px;text-align:center;top:36.11px;font-size:5.4px;color:#4a4a4a">ГИПОП. Нач.</div>
<div class="t" style="left:53.50px;width:120px;text-align:center;top:43.11px;font-size:5.4px;color:#4a4a4a">задание для</div>
<div class="t" style="left:53.50px;width:120px;text-align:center;top:50.11px;font-size:5.4px;color:#4a4a4a">ТХ</div>
<div class="t" style="left:154.70px;width:120px;text-align:center;top:30.07px;font-size:5.5px;color:#4a4a4a">ГИП П</div>
<div class="t" style="left:154.70px;width:120px;text-align:center;top:37.08px;font-size:5.5px;color:#4a4a4a">Нач. задание</div>
<div class="t" style="left:154.70px;width:120px;text-align:center;top:43.58px;font-size:5.5px;color:#4a4a4a">для ПЗУ, ПР,</div>
<div class="t" style="left:154.70px;width:120px;text-align:center;top:50.08px;font-size:5.5px;color:#4a4a4a">КР, ТБЭ, ОДИ,</div>
<div class="t" style="left:154.70px;width:120px;text-align:center;top:56.58px;font-size:5.5px;color:#4a4a4a">БИ</div>
<div class="t" style="left:53.50px;width:120px;text-align:center;top:230.01px;font-size:5.4px;color:#4a4a4a">ТХ1П. Задание</div>
<div class="t" style="left:53.50px;width:120px;text-align:center;top:236.51px;font-size:5.4px;color:#4a4a4a">для АР, КР,</div>
<div class="t" style="left:53.50px;width:120px;text-align:center;top:243.01px;font-size:5.4px;color:#4a4a4a">ИОС и ПЗУ</div>
<div class="t" style="left:242.50px;width:120px;text-align:center;top:19.25px;font-size:5.0px;color:#4a4a4a">Протокол</div>
<div class="t" style="left:242.50px;width:120px;text-align:center;top:25.25px;font-size:5.0px;color:#4a4a4a">брифинга</div>
<div class="t" style="left:352.30px;top:40.58px;font-size:5.5px;color:#4a4a4a">1. Проектировщики</div>
<div class="t" style="left:352.30px;top:47.08px;font-size:5.5px;color:#4a4a4a">расписываются кровью за</div>
<div class="t" style="left:352.30px;top:53.58px;font-size:5.5px;color:#4a4a4a">ознакомление</div>
<div class="t" style="left:352.30px;top:60.27px;font-size:5.5px;color:#4a4a4a">2. Обязательное обучение по</div>
<div class="t" style="left:352.30px;top:66.88px;font-size:5.5px;color:#4a4a4a">общим координатам</div>
<div class="t" style="left:441.50px;top:214.48px;font-size:5.2px;color:#4a4a4a">СС</div>
</div>
</body></html>
